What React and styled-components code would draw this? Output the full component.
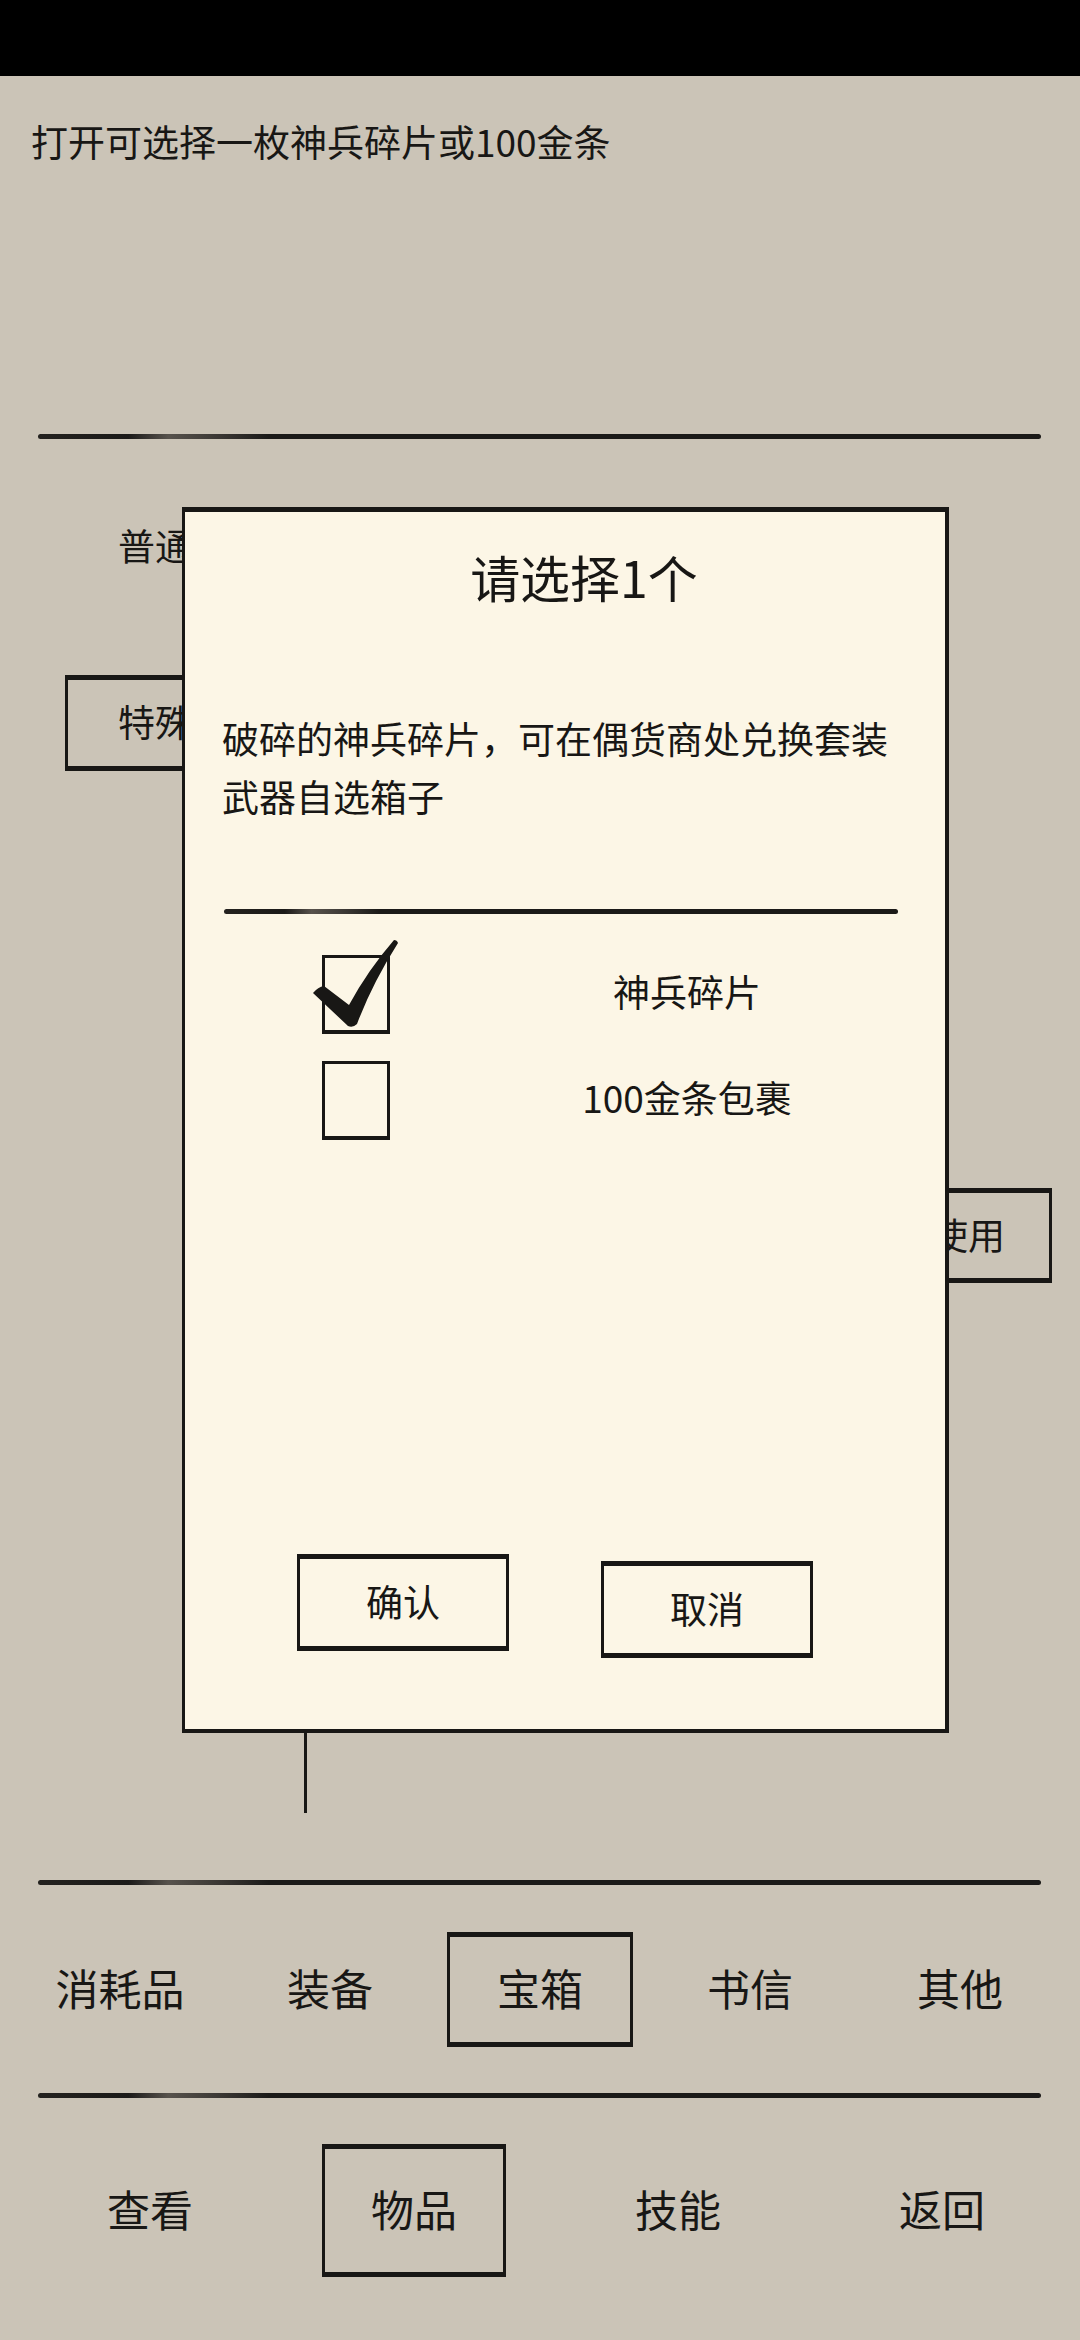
import styled, { createGlobalStyle, css } from "styled-components";

const ink = "#181715";
const paper = "#fcf6e6";
const ground = "#cbc4b7";

const GlobalStyle = createGlobalStyle`
  html, body {
    margin: 0;
    padding: 0;
    background: ${ground};
  }
  body {
    font-family: "Noto Sans CJK SC", "Noto Sans", sans-serif;
    font-weight: 400;
    color: ${ink};
  }
  * {
    box-sizing: border-box;
  }
`;

// hand-drawn frame: heavier brush strokes top and bottom
const sketchFrame = css`
  border-style: solid;
  border-color: ${ink};
  border-width: 5px 3px 5px 3px;
`;

const Screen = styled.div`
  position: relative;
  width: 1080px;
  height: 2340px;
  overflow: hidden;
  display: flex;
  flex-direction: column;
  background: ${ground};
`;

const StatusBar = styled.div`
  flex-shrink: 0;
  height: 76px;
  background: #000;
`;

const Header = styled.div`
  flex-shrink: 0;
  height: 358px;
  padding: 40px 31px 0;
  font-size: 37px;
  line-height: 50px;
`;

const Rule = styled.div`
  flex-shrink: 0;
  height: 5px;
  margin: 0 39px 0 38px;
  border-radius: 3px;
  background: linear-gradient(
    90deg,
    #24221f 0%,
    #1b1a18 9%,
    #57524c 13%,
    #3b3834 18%,
    #1b1a18 23%,
    #1b1a18 100%
  );
`;

const Shelf = styled.div`
  flex-shrink: 0;
  height: 1441px;
  display: grid;
  grid-template-columns: 304px 3px 1fr;
`;

const Categories = styled.div`
  padding: 86px 0 0 65px;
  display: flex;
  flex-direction: column;
  align-items: flex-start;
`;

const CategoryLabel = styled.div`
  width: 180px;
  text-align: center;
  font-size: 37px;
  line-height: 40px;
`;

const SketchButton = styled.div`
  ${sketchFrame};
  width: ${(p) => p.$w}px;
  height: ${(p) => p.$h}px;
  margin-top: ${(p) => p.$top || 0}px;
  padding-bottom: 4px;
  display: flex;
  align-items: center;
  justify-content: center;
  font-size: 37px;
  background: transparent;
`;

const ListEdge = styled.div`
  align-self: end;
  height: 700px;
  margin-bottom: 67px;
  background: ${ink};
`;

const Detail = styled.div`
  padding: 749px 28px 0 0;
  display: flex;
  justify-content: flex-end;
  align-items: flex-start;
`;

const TabRow = styled.div`
  flex-shrink: 0;
  height: 208px;
  padding-left: 15px;
  display: grid;
  grid-template-columns: repeat(5, 210px);
  align-items: center;
  justify-items: center;
`;

const Tab = styled.div`
  width: 186px;
  height: 115px;
  padding-bottom: 4px;
  display: flex;
  align-items: center;
  justify-content: center;
  font-size: 43px;
  border: 3px solid transparent;
  ${(p) => p.$active && sketchFrame};
`;

const NavRow = styled.div`
  flex-shrink: 0;
  height: 224px;
  padding-left: 18px;
  display: grid;
  grid-template-columns: repeat(4, 264px);
  align-items: center;
  justify-items: center;
`;

const NavItem = styled.div`
  width: 184px;
  height: 133px;
  padding-bottom: 4px;
  display: flex;
  align-items: center;
  justify-content: center;
  font-size: 43px;
  border: 3px solid transparent;
  ${(p) => p.$active && sketchFrame};
`;

const Dialog = styled.div`
  position: absolute;
  left: 182px;
  top: 507px;
  width: 767px;
  height: 1226px;
  background: ${paper};
  border-style: solid;
  border-color: ${ink};
  border-width: 5px 4px 4px 3px;
  display: flex;
  flex-direction: column;
`;

const DialogTitle = styled.h2`
  margin: 34px 0 0;
  padding-left: 38px;
  text-align: center;
  font-size: 50px;
  font-weight: 400;
  line-height: 60px;
`;

const Description = styled.p`
  margin: 103px 0 0 37px;
  width: 680px;
  font-size: 37px;
  line-height: 58px;
`;

const DialogRule = styled(Rule)`
  margin: 84px 47px 0 39px;
`;

const Options = styled.div`
  margin-top: 41px;
  display: flex;
  flex-direction: column;
  gap: 27px;
`;

const OptionRow = styled.div`
  padding-left: 137px;
  display: flex;
  align-items: center;
`;

const Checkbox = styled.div`
  position: relative;
  width: 68px;
  height: 79px;
  border: 3px solid ${ink};
  border-bottom-width: 4px;
`;

const CheckMark = styled.svg`
  position: absolute;
  left: -15px;
  top: -22px;
  width: 90px;
  height: 95px;
`;

const OptionLabel = styled.div`
  width: 500px;
  margin-left: 47px;
  padding-bottom: 8px;
  text-align: center;
  font-size: 37px;
  line-height: 44px;
`;

const ButtonRow = styled.div`
  margin-top: auto;
  padding: 0 0 71px 112px;
  display: flex;
  align-items: flex-start;
  gap: 92px;
`;

const tabs = ["消耗品", "装备", "宝箱", "书信", "其他"];
const navs = ["查看", "物品", "技能", "返回"];
const options = [
  { label: "神兵碎片", checked: true },
  { label: "100金条包裹", checked: false },
];

function Tick() {
  return (
    <CheckMark viewBox="0 0 90 95">
      <path
        d="M3 57 Q8 51 14 50 L39 69 Q58 34 84 4 Q87 4 88 7 Q62 48 47 88 Q43 92 38 90 Z"
        fill={ink}
      />
    </CheckMark>
  );
}

export default function App() {
  return (
    <>
      <GlobalStyle />
      <Screen>
        <StatusBar />
        <Header>打开可选择一枚神兵碎片或100金条</Header>
        <Rule />

        <Shelf>
          <Categories>
            <CategoryLabel>普通</CategoryLabel>
            <SketchButton $w={180} $h={96} $top={110}>
              特殊
            </SketchButton>
          </Categories>
          <ListEdge />
          <Detail>
            <SketchButton $w={168} $h={95}>
              使用
            </SketchButton>
          </Detail>
        </Shelf>

        <Rule />
        <TabRow>
          {tabs.map((t) => (
            <Tab key={t} $active={t === "宝箱"}>
              {t}
            </Tab>
          ))}
        </TabRow>
        <Rule />
        <NavRow>
          {navs.map((n) => (
            <NavItem key={n} $active={n === "物品"}>
              {n}
            </NavItem>
          ))}
        </NavRow>

        <Dialog>
          <DialogTitle>请选择1个</DialogTitle>
          <Description>破碎的神兵碎片，可在偶货商处兑换套装武器自选箱子</Description>
          <DialogRule />
          <Options>
            {options.map((o) => (
              <OptionRow key={o.label}>
                <Checkbox>{o.checked && <Tick />}</Checkbox>
                <OptionLabel>{o.label}</OptionLabel>
              </OptionRow>
            ))}
          </Options>
          <ButtonRow>
            <SketchButton $w={212} $h={97}>
              确认
            </SketchButton>
            <SketchButton $w={212} $h={97} $top={7}>
              取消
            </SketchButton>
          </ButtonRow>
        </Dialog>
      </Screen>
    </>
  );
}
